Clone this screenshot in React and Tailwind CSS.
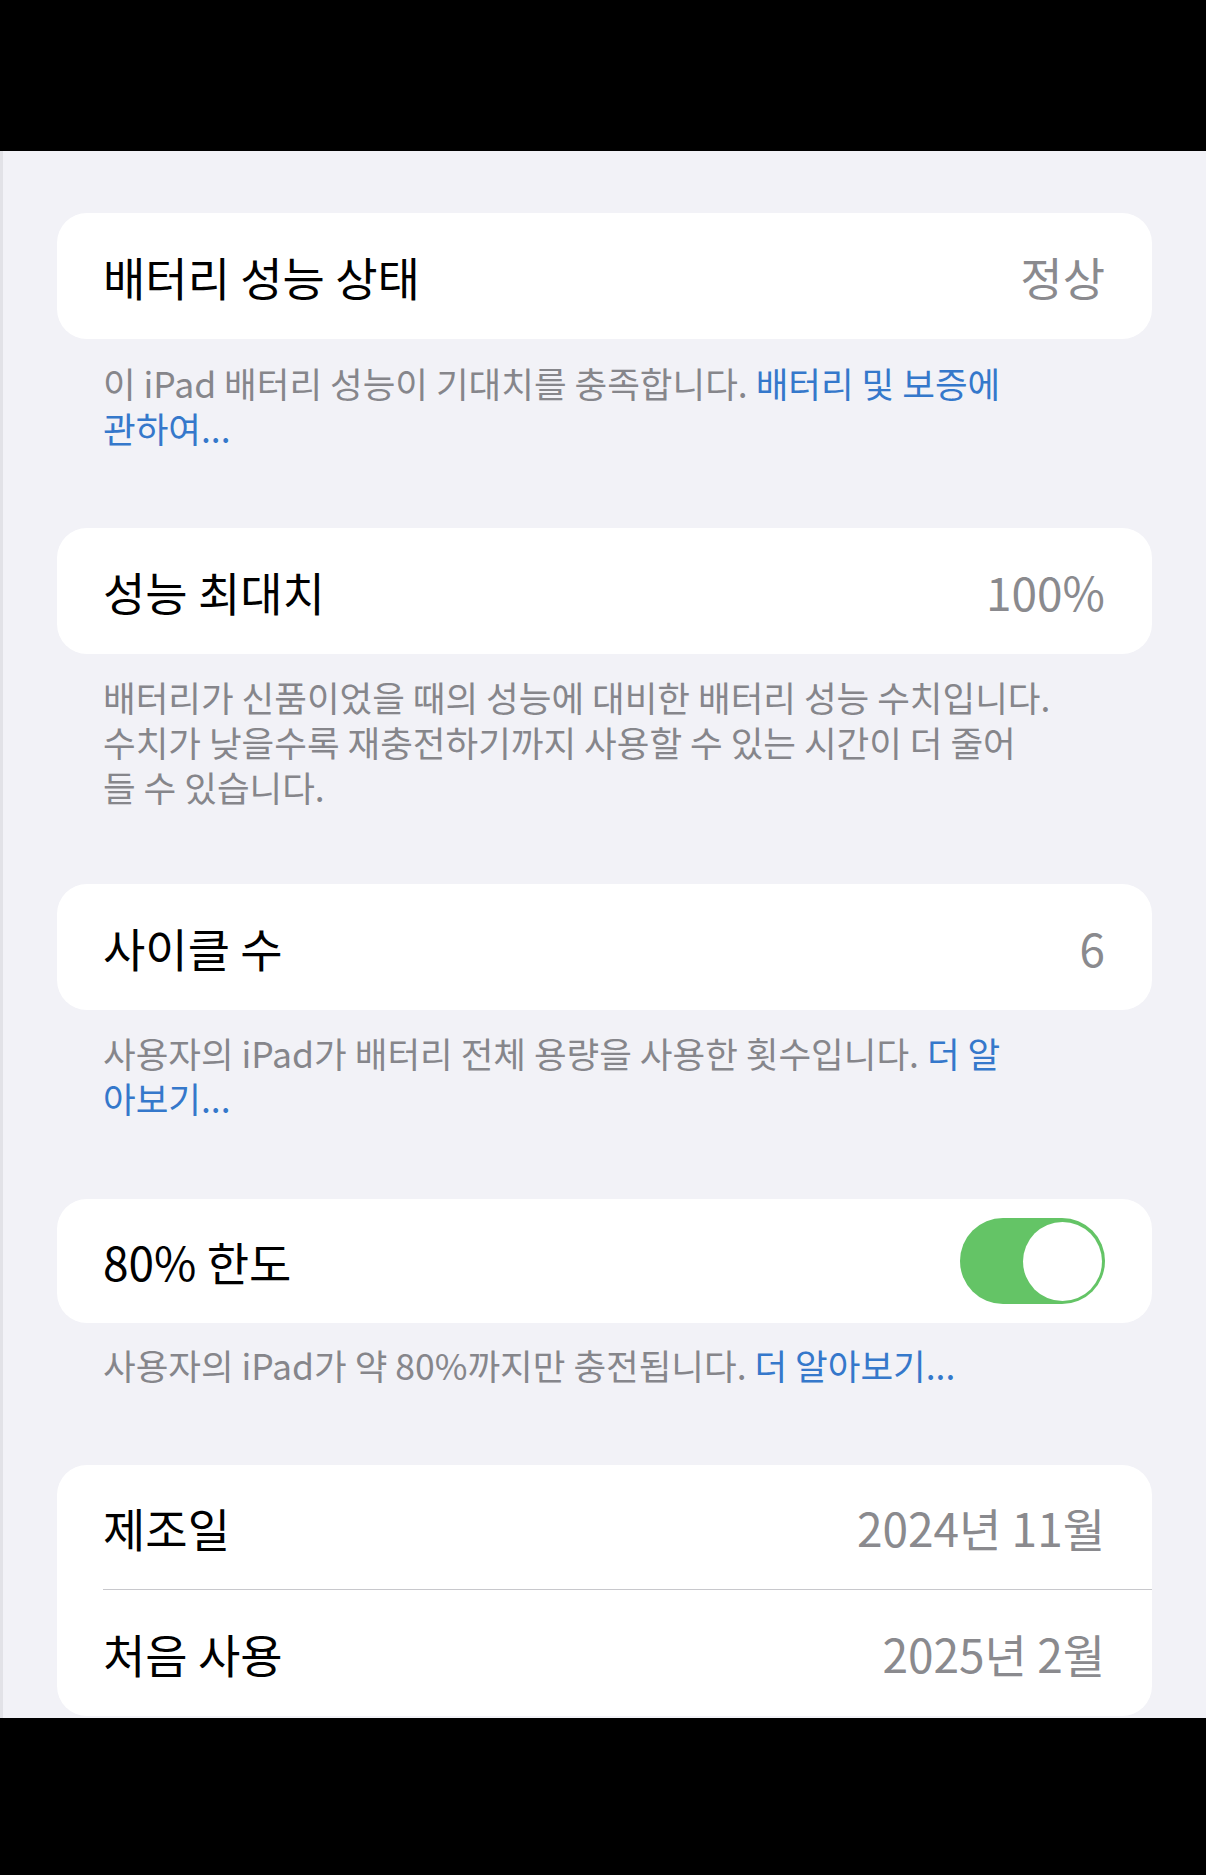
import React from 'react';

const font = { fontFamily: '"Noto Sans CJK KR", "Noto Sans", sans-serif' };

// single row inside a grouped card
const Row = ({ label, value, children, className = 'h-[126px]' }) => (
  <div className={`flex items-center justify-between pl-[46px] pr-[47px] ${className}`}>
    <span className="text-[46px] leading-none text-black">{label}</span>
    {value && <span className="text-[46px] leading-none text-[#8a8a8e]">{value}</span>}
    {children}
  </div>
);

const Footer = ({ children, className }) => (
  <p className={`px-[46px] text-[35.5px] leading-[45px] text-[#86868b] whitespace-nowrap ${className}`}>
    {children}
  </p>
);

const Link = ({ children }) => <span className="text-[#3578cb]">{children}</span>;

const Toggle = () => (
  <div className="flex h-[86px] w-[145px] items-center justify-end rounded-full bg-[#64c466] pr-[3px]">
    <div className="h-[79px] w-[79px] rounded-full bg-white" />
  </div>
);

export default function App() {
  return (
    <div className="w-full min-h-[1875px] bg-black" style={font}>
      <div className="h-[151px] bg-black" />

      <div className="bg-[#f2f2f7] border-l-[3px] border-[#e2e2e7] pt-[62px] px-[54px] pb-[2px]">
        {/* battery health */}
        <div className="rounded-[30px] bg-white">
          <Row label="배터리 성능 상태" value="정상" />
        </div>
        <Footer className="pt-[21px] pb-[78px]">
          이 iPad 배터리 성능이 기대치를 충족합니다. <Link>배터리 및 보증에</Link>
          <br />
          <Link>관하여...</Link>
        </Footer>

        {/* maximum capacity */}
        <div className="rounded-[30px] bg-white">
          <Row label="성능 최대치" value="100%" />
        </div>
        <Footer className="pt-[20px] pb-[75px]">
          배터리가 신품이었을 때의 성능에 대비한 배터리 성능 수치입니다.
          <br />
          수치가 낮을수록 재충전하기까지 사용할 수 있는 시간이 더 줄어
          <br />
          들 수 있습니다.
        </Footer>

        {/* cycle count */}
        <div className="rounded-[30px] bg-white">
          <Row label="사이클 수" value="6" />
        </div>
        <Footer className="pt-[20px] pb-[79px]">
          사용자의 iPad가 배터리 전체 용량을 사용한 횟수입니다. <Link>더 알</Link>
          <br />
          <Link>아보기...</Link>
        </Footer>

        {/* 80% limit */}
        <div className="rounded-[30px] bg-white">
          <Row label="80% 한도" className="h-[124px] pr-[45px]">
            <Toggle />
          </Row>
        </div>
        <Footer className="pt-[19px] pb-[78px]">
          사용자의 iPad가 약 80%까지만 충전됩니다. <Link>더 알아보기...</Link>
        </Footer>

        {/* dates */}
        <div className="rounded-[30px] bg-white">
          <Row label="제조일" value="2024년 11월" className="h-[124px]" />
          <div className="ml-[46px] h-px bg-[#c8c8cc]" />
          <Row label="처음 사용" value="2025년 2월" />
        </div>
      </div>

      <div className="h-[157px] bg-black" />
    </div>
  );
}
